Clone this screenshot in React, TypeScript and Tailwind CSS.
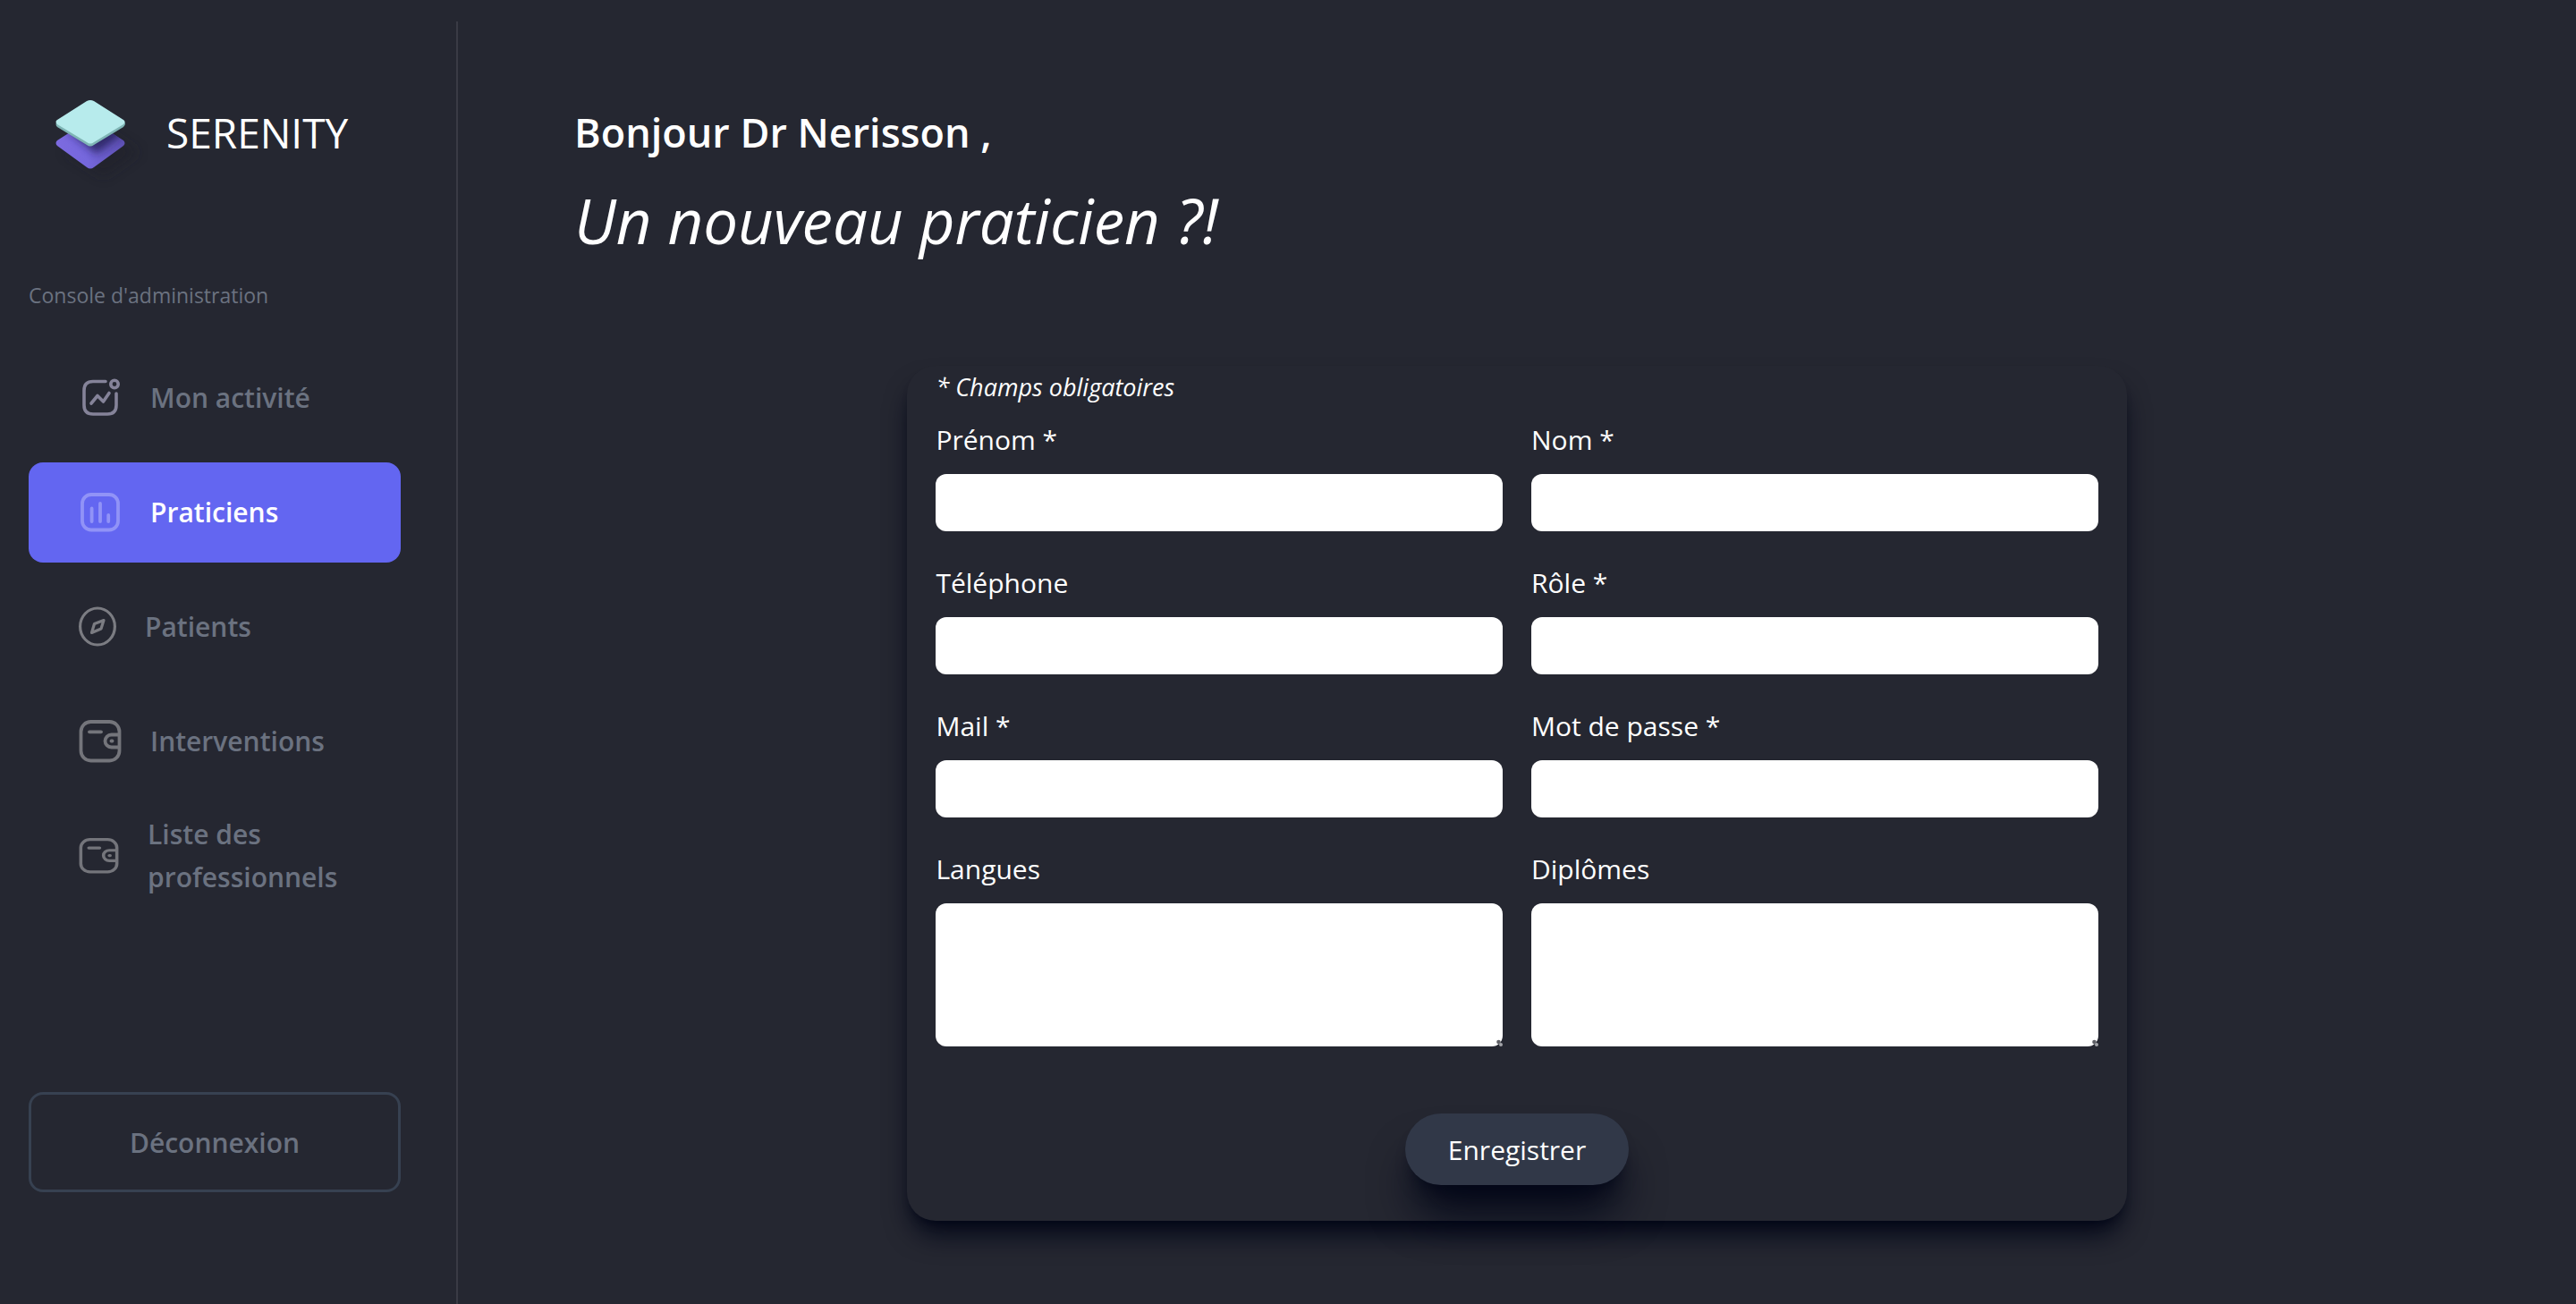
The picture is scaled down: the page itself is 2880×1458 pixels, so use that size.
import type { ReactNode } from "react";

function Logo() {
  return (
    <svg className="h-20 w-24 overflow-visible" viewBox="0 0 96 80" aria-hidden="true">
      <defs>
        <linearGradient id="violet" x1="0" y1="0" x2="1" y2="0">
          <stop offset="0" stopColor="#7d6be0" />
          <stop offset="0.45" stopColor="#7567dc" />
          <stop offset="1" stopColor="#5c4fb0" />
        </linearGradient>
        <filter id="soft" x="-50%" y="-50%" width="220%" height="220%">
          <feGaussianBlur stdDeviation="7" />
        </filter>
        <filter id="shade" x="-50%" y="-50%" width="200%" height="200%">
          <feGaussianBlur stdDeviation="5" />
        </filter>
        <clipPath id="base">
          <path d="M2 49 35 28Q39 26 43 28L76 49Q79 52 76 55L43 79Q39 82 35 79L2 55Q-1 52 2 49Z" />
        </clipPath>
      </defs>
      <path d="M10 62 54 36 94 62 54 90Z" fill="#1d1e26" opacity="0.4" filter="url(#soft)" />
      <g clipPath="url(#base)">
        <rect x="-2" y="24" width="84" height="62" fill="url(#violet)" />
        <path d="M14 38 45 22 78 36 70 46 46 64Z" fill="#231d52" opacity="0.8" filter="url(#shade)" />
      </g>
      <path d="M2 27 35 6Q39 3 43 6L76 27Q80 30 76 34L43 54Q39 57 35 54L2 34Q-1 31 2 27Z" fill="#7fb5b5" />
      <path d="M2 26 35 5Q39 3 43 5L76 26Q79 28 76 31L43 51Q39 54 35 51L2 31Q-1 28 2 26Z" fill="#b7ebec" />
    </svg>
  );
}

function ActivityIcon() {
  return (
    <svg className="h-12 w-12 shrink-0" viewBox="0 0 48 48" fill="none" stroke="#858399" strokeWidth="3.6" strokeLinecap="round" strokeLinejoin="round" aria-hidden="true">
      <path d="M30 5.500H16C9.500 5.500 6 9 6 15.500V32C6 38.500 9.500 42 16 42H32C38.500 42 42 38.500 42 32V19" />
      <path d="M14 30 21 21.500 27.500 28 34 18.500" />
      <circle cx="40" cy="8.500" r="4.200" />
    </svg>
  );
}

function ChartIcon() {
  return (
    <svg className="h-12 w-12 shrink-0" viewBox="0 0 48 48" fill="none" stroke="#9193f7" strokeWidth="3.8" strokeLinecap="round" aria-hidden="true">
      <rect x="4" y="4" width="40" height="39.500" rx="10" />
      <path d="M14.600 19.500V34M24 14V34M33.200 27V34" />
    </svg>
  );
}

function CompassIcon() {
  return (
    <svg className="h-12 w-[42px] shrink-0" viewBox="0 0 42 48" fill="none" stroke="#7b7c82" strokeWidth="3.2" strokeLinejoin="round" aria-hidden="true">
      <ellipse cx="21" cy="23.500" rx="19.400" ry="20.500" />
      <path d="M28 16.500 17.500 20.500 14.500 30.500 25 26Z" />
    </svg>
  );
}

function WalletIcon({ className }: { className: string }) {
  return (
    <svg className={className} viewBox="0 0 48 48" preserveAspectRatio="none" fill="none" stroke="#74757b" strokeWidth="3.8" strokeLinecap="round" aria-hidden="true">
      <rect x="2.500" y="2" width="43" height="43.500" rx="11" />
      <path d="M12 13.300H25" />
      <path d="M45 16.500H36.500A6.800 6.800 0 0 0 36.500 30.500H45" />
      <path d="M36.500 23.500H37.500" />
    </svg>
  );
}

const menu: { label: string; icon: ReactNode; active?: boolean }[] = [
  { label: "Mon activité", icon: <ActivityIcon /> },
  { label: "Praticiens", icon: <ChartIcon />, active: true },
  { label: "Patients", icon: <CompassIcon /> },
  { label: "Interventions", icon: <WalletIcon className="h-12 w-12 shrink-0" /> },
  { label: "Liste des professionnels", icon: <WalletIcon className="h-10 w-[45px] shrink-0" /> },
];

const fields: { id: string; label: string; type: string }[] = [
  { id: "prenom", label: "Prénom *", type: "text" },
  { id: "nom", label: "Nom *", type: "text" },
  { id: "telephone", label: "Téléphone", type: "tel" },
  { id: "role", label: "Rôle *", type: "text" },
  { id: "mail", label: "Mail *", type: "email" },
  { id: "motdepasse", label: "Mot de passe *", type: "password" },
  { id: "langues", label: "Langues", type: "textarea" },
  { id: "diplomes", label: "Diplômes", type: "textarea" },
];

function Sidebar() {
  return (
    <aside className="mt-6 flex w-[512px] shrink-0 flex-col border-r-2 border-[#3a3b45] pt-[84px] pr-[62px] pl-8">
      <div className="flex items-center gap-7 pl-[30px]">
        <Logo />
        <span className="text-[46px] leading-[80px] text-white">SERENITY</span>
      </div>
      <p className="mt-[126px] text-[23px] leading-8 text-[#6b7280]">Console d'administration</p>
      <nav className="mt-[43px] flex flex-col gap-4">
        {menu.map((item) => (
          <a
            key={item.label}
            href="#"
            className={
              item.active
                ? "flex h-28 items-center gap-8 rounded-2xl bg-[#6366f1] px-14 text-[30px] leading-12 font-semibold text-white"
                : "flex h-28 items-center gap-8 rounded-2xl px-14 text-[30px] leading-12 font-semibold text-[#6b7280]"
            }
          >
            {item.icon}
            <span className="min-w-0">{item.label}</span>
          </a>
        ))}
      </nav>
      <button
        type="button"
        className="mt-52 h-28 w-full rounded-2xl border-[3px] border-[#374151] text-[30px] font-semibold text-[#6b7280]"
      >
        Déconnexion
      </button>
    </aside>
  );
}

function TextArea({ id }: { id: string }) {
  return (
    <div className="relative flex">
      <textarea
        id={id}
        className="h-40 w-full resize-none rounded-xl bg-white px-4 py-2 text-[30px] text-gray-900"
      />
      <svg className="pointer-events-none absolute right-0 bottom-0 h-2 w-2" viewBox="0 0 8 8" aria-hidden="true">
        <path d="M8 0V8H0A8 8 0 0 0 8 0Z" fill="#252731" />
        <circle cx="3.500" cy="3" r="2.300" fill="#5f6066" />
        <circle cx="6" cy="6" r="2" fill="#a3a4a9" />
      </svg>
    </div>
  );
}

function PractitionerForm() {
  return (
    <form className="w-3/5 rounded-[32px] bg-[#252731] px-8 pt-1 pb-10 shadow-[0_20px_30px_-6px_#020617,0_8px_12px_-8px_#020617]">
      <p className="text-[27px] leading-10 text-white italic">* Champs obligatoires</p>
      <div className="mt-[15px] grid grid-cols-2 gap-x-8 gap-y-[34px]">
        {fields.map((field) => (
          <div key={field.id} className="flex flex-col gap-[14px]">
            <label htmlFor={field.id} className="text-[30px] leading-12 text-white">
              {field.label}
            </label>
            {field.type === "textarea" ? (
              <TextArea id={field.id} />
            ) : (
              <input
                id={field.id}
                type={field.type}
                className="h-16 w-full rounded-xl bg-white px-4 text-[30px] text-gray-900"
              />
            )}
          </div>
        ))}
      </div>
      <div className="mt-[75px] flex justify-center">
        <button
          type="submit"
          className="h-20 rounded-full bg-[#313848] px-12 text-[30px] text-white shadow-[0_40px_50px_-10px_#020617,0_16px_20px_-12px_#020617]"
        >
          Enregistrer
        </button>
      </div>
    </form>
  );
}

export default function App() {
  return (
    <div className="flex min-h-screen bg-[#252731] font-['Open_Sans',sans-serif]">
      <Sidebar />
      <main className="min-w-0 flex-1 pt-28">
        <header className="px-[130px] text-white">
          <h1 className="text-[45px] leading-[72px] font-semibold">Bonjour Dr Nerisson ,</h1>
          <h2 className="text-[69px] leading-[124px] italic">Un nouveau praticien ?!</h2>
        </header>
        <section className="mt-[101px] flex justify-center px-12">
          <PractitionerForm />
        </section>
      </main>
    </div>
  );
}
